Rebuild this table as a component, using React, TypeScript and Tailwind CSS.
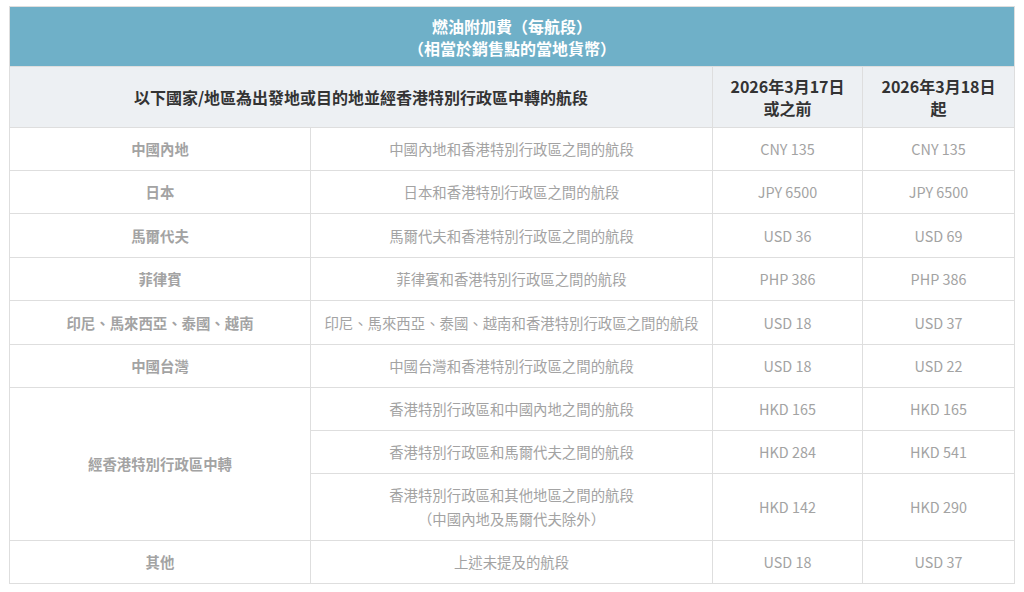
import React from "react";

type Row = { c1?: string; span?: number; c2: React.ReactNode; a: string; b: string; h: number };

const rows: Row[] = [
  { c1: "中國內地", c2: "中國內地和香港特別行政區之間的航段", a: "CNY 135", b: "CNY 135", h: 43 },
  { c1: "日本", c2: "日本和香港特別行政區之間的航段", a: "JPY 6500", b: "JPY 6500", h: 43 },
  { c1: "馬爾代夫", c2: "馬爾代夫和香港特別行政區之間的航段", a: "USD 36", b: "USD 69", h: 44 },
  { c1: "菲律賓", c2: "菲律賓和香港特別行政區之間的航段", a: "PHP 386", b: "PHP 386", h: 43 },
  { c1: "印尼、馬來西亞、泰國、越南", c2: "印尼、馬來西亞、泰國、越南和香港特別行政區之間的航段", a: "USD 18", b: "USD 37", h: 44 },
  { c1: "中國台灣", c2: "中國台灣和香港特別行政區之間的航段", a: "USD 18", b: "USD 22", h: 43 },
  { c1: "經香港特別行政區中轉", span: 3, c2: "香港特別行政區和中國內地之間的航段", a: "HKD 165", b: "HKD 165", h: 43 },
  { c2: "香港特別行政區和馬爾代夫之間的航段", a: "HKD 284", b: "HKD 541", h: 43 },
  {
    c2: (
      <>
        香港特別行政區和其他地區之間的航段
        <br />（中國內地及馬爾代夫除外）
      </>
    ),
    a: "HKD 142",
    b: "HKD 290",
    h: 67,
  },
  { c1: "其他", c2: "上述未提及的航段", a: "USD 18", b: "USD 37", h: 43 },
];

const cell = "border border-[#dedede] text-center align-middle p-0";

export default function App() {
  return (
    <div
      className="w-[1024px] h-[592px] bg-white pt-[6px] pl-[9px]"
      style={{ fontFamily: '"Noto Sans CJK TC", "Noto Sans", sans-serif' }}
    >
      <table className="border-collapse table-fixed w-[1005px] text-[14.4px] leading-[22px]">
        <colgroup>
          <col className="w-[301px]" />
          <col className="w-[402px]" />
          <col className="w-[150px]" />
          <col className="w-[152px]" />
        </colgroup>
        <thead className="text-[16px]">
          <tr className="h-[60px]">
            <th colSpan={4} className={`${cell} bg-[#6fb0c8] text-white font-bold leading-[22px]`}>
              燃油附加費（每航段）
              <br />
              （相當於銷售點的當地貨幣）
            </th>
          </tr>
          <tr className="h-[61px]">
            <th colSpan={2} className={`${cell} bg-[#edf0f3] text-[#333] font-bold leading-[22px]`}>
              以下國家/地區為出發地或目的地並經香港特別行政區中轉的航段
            </th>
            <th className={`${cell} bg-[#edf0f3] text-[#333] font-bold leading-[22px]`}>
              2026年3月17日
              <br />
              或之前
            </th>
            <th className={`${cell} bg-[#edf0f3] text-[#333] font-bold leading-[22px]`}>
              2026年3月18日
              <br />
              起
            </th>
          </tr>
        </thead>
        <tbody className="text-[#a3a3a3]">
          {rows.map((r, i) => (
            <tr key={i} style={{ height: r.h }}>
              {r.c1 !== undefined && (
                <td rowSpan={r.span ?? 1} className={`${cell} font-bold`}>
                  {r.c1}
                </td>
              )}
              <td className={`${cell} leading-[24px]`}>{r.c2}</td>
              <td className={cell}>{r.a}</td>
              <td className={cell}>{r.b}</td>
            </tr>
          ))}
        </tbody>
      </table>
    </div>
  );
}
